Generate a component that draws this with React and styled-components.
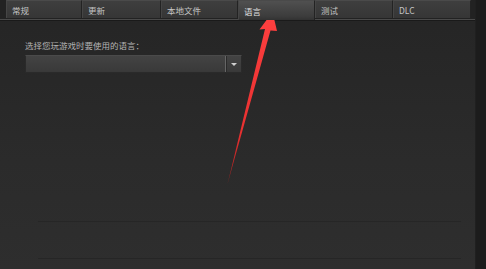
import React from "react";
import styled, { createGlobalStyle } from "styled-components";

const Global = createGlobalStyle`
  html, body { margin: 0; padding: 0; background: #262626; }
  body { font-family: "Noto Sans CJK SC", "Liberation Sans", sans-serif; }
`;

const Window = styled.div`
  position: relative;
  width: 486px;
  height: 269px;
  display: flex;
  background: #272727;
  overflow: hidden;
`;

const Main = styled.div`
  flex: 1;
  display: flex;
  flex-direction: column;
  background: linear-gradient(#252525, #2b2b2b 60%, #2e2e2e);
`;

const Edge = styled.div`
  width: 10px;
  background: #1c1c1c;
  border-left: 1px solid #202020;
`;

const TabBar = styled.div`
  display: flex;
  align-items: flex-start;
  height: 19px;
  padding-left: 6px;
  margin-right: 0;
  border-bottom: 1px solid #4a4a4a;
  box-shadow: 0 1px 0 #1a1a1a;
  background: #222;
`;

const Tab = styled.div`
  box-sizing: border-box;
  width: ${(p) => p.w}px;
  height: ${(p) => (p.active ? 20 : 18)}px;
  padding-left: 5px;
  display: flex;
  align-items: center;
  font-size: 8.5px;
  color: ${(p) => (p.active ? "#e0e0e0" : "#c4c4c4")};
  background: ${(p) =>
    p.active
      ? "linear-gradient(#505050, #3c3c3c 80%, #323232)"
      : "linear-gradient(#3e3e3e, #363636)"};
  border-right: 1px solid #232323;
  border-left: 1px solid #454545;
  border-top: 1px solid #4a4a4a;
  position: relative;
  z-index: ${(p) => (p.active ? 1 : 0)};
`;

const Content = styled.div`
  flex: 1;
  padding: 20px 0 0 25px;
  display: flex;
  flex-direction: column;
  gap: 4px;
`;

const Label = styled.div`
  font-size: 8.5px;
  color: #b4b4b4;
  line-height: 11px;
`;

const Select = styled.div`
  box-sizing: border-box;
  width: 217px;
  height: 18px;
  display: flex;
  background: linear-gradient(#434343, #393939);
  border: 1px solid #2a2a2a;
  border-top-color: #4a4a4a;
`;

const SelectValue = styled.div`
  flex: 1;
`;

const SelectButton = styled.div`
  width: 15px;
  border-left: 1px solid #666;
  box-shadow: inset 1px 0 0 #2a2a2a;
  display: flex;
  align-items: center;
  justify-content: center;
`;

const Caret = styled.div`
  width: 0;
  height: 0;
  border-left: 3px solid transparent;
  border-right: 3px solid transparent;
  border-top: 3px solid #d0d0d0;
`;

const Rows = styled.div`
  margin-top: auto;
  padding: 0 14px 10px 13px;
  display: flex;
  flex-direction: column;
  gap: 36px;
`;

const FaintLine = styled.div`
  height: 1px;
  background: #262626;
`;

const ArrowOverlay = styled.svg`
  position: absolute;
  left: 0;
  top: 0;
  pointer-events: none;
`;

const tabs = [
  { label: "常规", w: 76 },
  { label: "更新", w: 79 },
  { label: "本地文件", w: 77 },
  { label: "语言", w: 77, active: true },
  { label: "测试", w: 78 },
  { label: "DLC", w: 78 },
];

export default function App() {
  return (
    <>
      <Global />
      <Window>
        <Main>
          <TabBar>
            {tabs.map((t) => (
              <Tab key={t.label} w={t.w} active={t.active}>
                {t.label}
              </Tab>
            ))}
          </TabBar>
          <Content>
            <Label>选择您玩游戏时要使用的语言：</Label>
            <Select>
              <SelectValue />
              <SelectButton>
                <Caret />
              </SelectButton>
            </Select>
            <Rows>
              <FaintLine />
              <FaintLine />
            </Rows>
          </Content>
        </Main>
        <Edge />
        <ArrowOverlay width="486" height="269" viewBox="0 0 486 269">
          <defs>
            <linearGradient id="ag" x1="0" y1="0" x2="0" y2="1">
              <stop offset="0" stopColor="#ff4040" />
              <stop offset="0.7" stopColor="#e83030" />
              <stop offset="1" stopColor="#a02020" />
            </linearGradient>
          </defs>
          <path
            d="M272.5 12 L259.5 29.5 L265 29 L227.5 184 L270.5 30.5 L277 31 Z"
            fill="url(#ag)"
          />
        </ArrowOverlay>
      </Window>
    </>
  );
}
